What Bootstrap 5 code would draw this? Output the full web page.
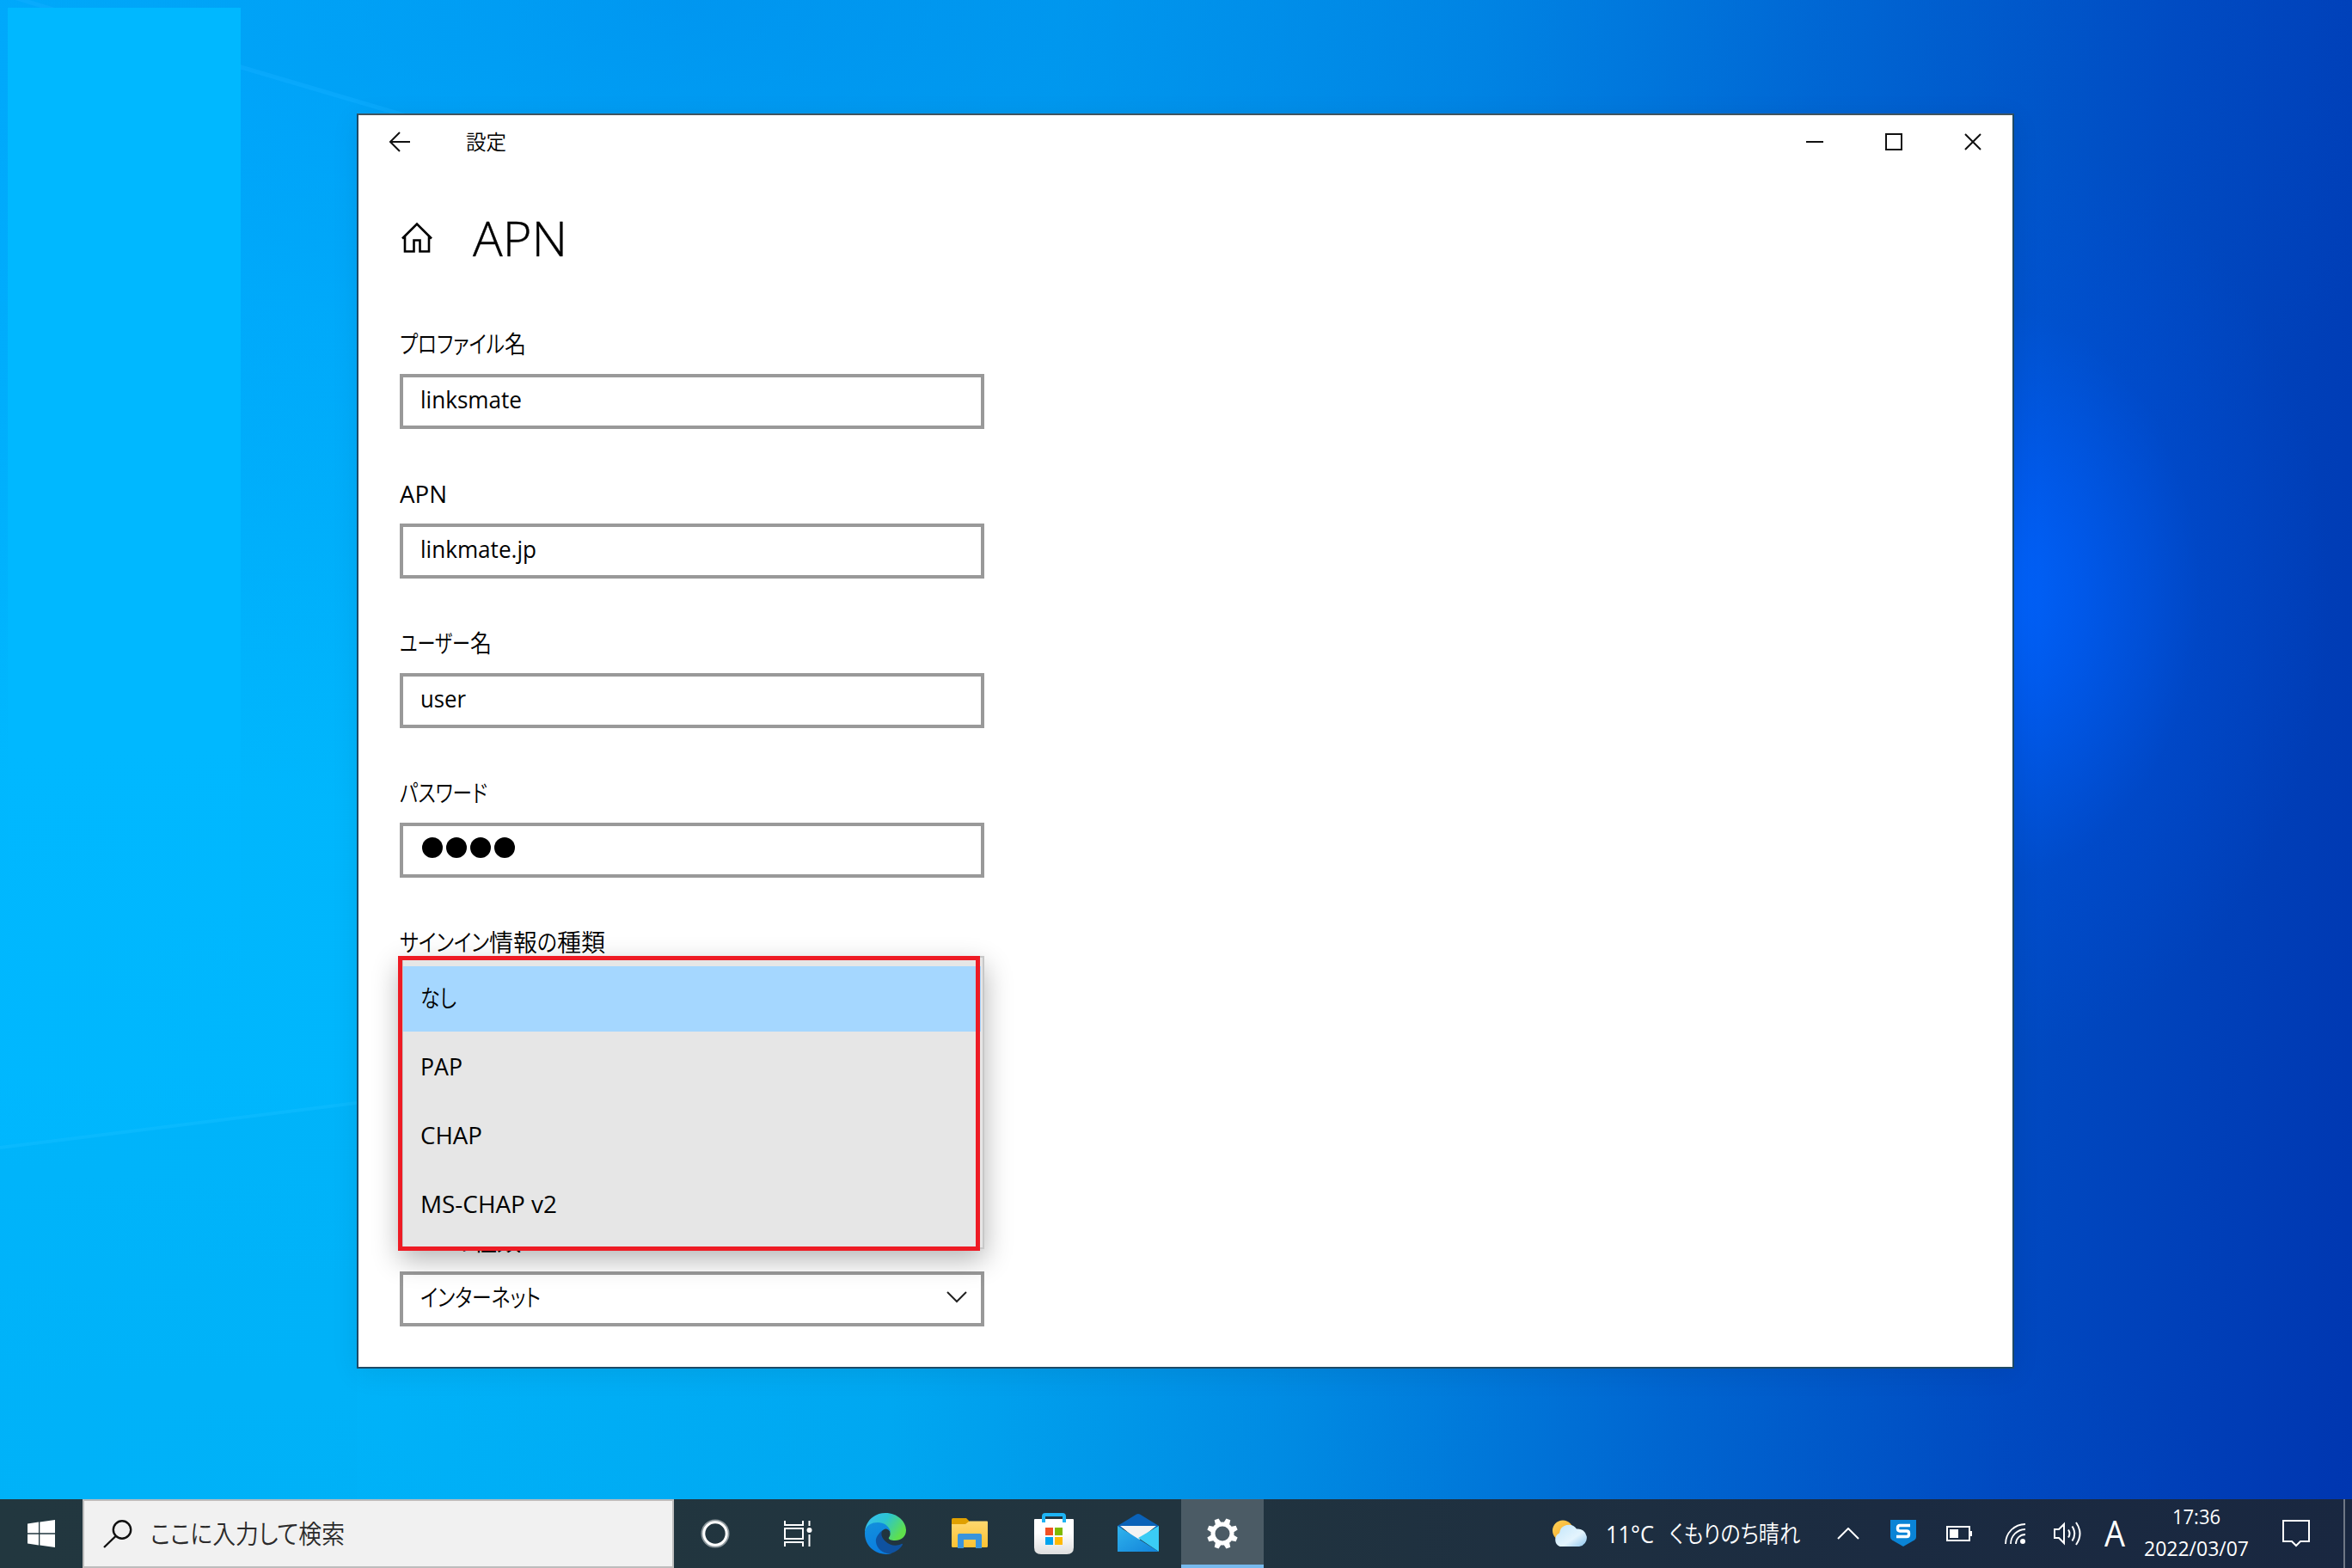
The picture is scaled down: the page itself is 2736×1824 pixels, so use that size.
<!DOCTYPE html>
<html lang="ja">
<head>
  <meta charset="UTF-8">
  <meta name="viewport" content="width=device-width, initial-scale=1.0">
  <title>設定</title>
  <link href="https://cdn.jsdelivr.net/npm/bootstrap@5.3.3/dist/css/bootstrap.min.css" rel="stylesheet">
  <script src="https://cdn.jsdelivr.net/npm/bootstrap@5.3.3/dist/js/bootstrap.bundle.min.js"></script>
  <style>
    body {
      font-family: "Open Sans", "Noto Sans CJK JP", sans-serif;
      font-size: 28px;
      line-height: 40px;
      color: #000;
      font-feature-settings: "palt";
    }
    svg { display: block; flex: none; }
    [data-w] { display: inline-block; white-space: nowrap; transform-origin: 0 50%; }
    .jp { font-weight: 350; }

    /* desktop */
    .desktop {
      height: 1744px;
      background:
        radial-gradient(ellipse 400px 540px at 2310px 690px, rgba(0,100,255,1) 0, rgba(0,94,250,.7) 28%, rgba(0,80,225,.28) 62%, rgba(0,70,200,0) 100%),
        radial-gradient(ellipse 2100px 950px at 800px 0, rgba(0,106,226,.38) 0, rgba(0,120,235,.2) 45%, rgba(0,130,240,0) 100%),
        radial-gradient(ellipse 2300px 500px at 300px 1744px, rgba(0,160,230,.18) 0, rgba(0,160,230,0) 100%),
        linear-gradient(97deg, #00b8ff 0, #00b6fc 20%, #00a8f2 42%, #0088e2 58%, #0064d0 72%, #0048c0 86%, #0036b0 100%);
    }
    .wall-panel { left: 9px; top: 9px; width: 271px; height: 1234px; background: linear-gradient(#00b8ff 70%, rgba(0,184,255,0)); }

    /* settings window */
    .win { left: 415px; top: 132px; width: 1928px; height: 1460px; background: #fff; border: 2px solid #1e4a66; border-top-color: #40545f; box-shadow: 0 6px 30px rgba(0,0,0,.08); }
    .title-row { height: 62px; }
    .back-btn { width: 96px; }
    .win-title { font-size: 24px; margin-left: 29px; }
    .win-btn { width: 92px; }
    .head-row { height: 160px; padding-left: 50px; gap: 47px; }
    .head-row h1 { font-size: 55px; font-weight: 300; line-height: 1; -webkit-text-stroke: .4px #000; }
    .fields { padding: 24px 0 0 48px; }
    .field { width: 680px; height: 174px; }
    .field label { height: 40px; margin-bottom: 15px; }
    .box { height: 64px; border: 4px solid #999; padding: 0 16px 7px 20px; background: #fff; }
    .box-select { padding-right: 16px; padding-bottom: 4px; }

    /* open list */
    .pop { left: 0; top: 36px; width: 680px; height: 341px; background: #e6e6e6; border: 2px solid #c8c8c8; border-left-width: 4px; padding-top: 10px; box-shadow: 0 12px 30px rgba(0,0,0,.3); z-index: 2; }
    .pop-item { height: 80px; padding: 0 0 4px 20px; }
    .pop-item.on { background: #a5d7ff; height: 76px; margin-bottom: 2px; width: 672px; padding-bottom: 2px; }
    .red-frame { left: -2px; top: 36px; width: 677px; height: 343px; border: 5px solid #ee1b24; z-index: 3; }

    /* taskbar */
    .taskbar { height: 80px; color: #fff; background: linear-gradient(90deg, #22373f 0, #21343f 50%, #1b2b41 80%, #192740 100%); }
    .start-btn, .task-btn { width: 96px; }
    .search-box { width: 688px; background: #f1f1f1; border: 2px solid #bdbdbd; color: #2b2b2b; font-size: 30px; padding-left: 22px; gap: 21px; }
    .apps { margin-left: 6px; gap: 2px; }
    .task-btn.active { background: #4b5b65; border-bottom: 4px solid #76b9ed; padding-top: 4px; }
    .weather { gap: 22px; padding-right: 34px; }
    .weather .sky { margin-left: -4px; }
    .t-caret { width: 44px; }
    .t-shield { width: 84px; }
    .t-batt { width: 46px; }
    .t-wifi { width: 84px; }
    .t-vol { width: 39px; }
    .t-ime { width: 69px; font-size: 42px; padding-bottom: 2px; }
    .t-clock { width: 122px; font-size: 24px; line-height: 37px; padding-top: 1px; }
    .t-note { width: 110px; }
    .t-peek { width: 10px; border-left: 2px solid #6f7785; }
  </style>
</head>
<body class="overflow-hidden">

  <div class="desktop position-relative overflow-hidden">
    <svg class="position-absolute top-0 start-0" width="2736" height="1744" viewBox="0 0 2736 1744">
      <path d="M0 -8L280 78L450 128V800H0z" fill="url(#ray)"/>
      <path d="M0 -8L280 78L470 134" fill="none" stroke="#10aeff" stroke-width="5" opacity=".5"/>
      <path d="M0 1336L415 1284V1744H0z" fill="#00aef6" opacity=".3"/>
      <path d="M0 1335L415 1283" stroke="#10bcff" stroke-width="4" opacity=".6"/>
      <defs><linearGradient id="ray" x1="0" y1="0" x2="0" y2="1"><stop offset="0" stop-color="#00a8ff" stop-opacity=".3"/><stop offset="1" stop-color="#00a8ff" stop-opacity="0"/></linearGradient></defs>
    </svg>
    <div class="wall-panel position-absolute"></div>

    <div class="win position-absolute">
      <div class="title-row d-flex align-items-center">
        <div class="back-btn d-flex justify-content-center">
          <svg width="26" height="24" viewBox="0 0 26 24" fill="none" stroke="#111" stroke-width="2"><path d="M25 12H2M13 1L2 12l11 11"/></svg>
        </div>
        <div class="win-title jp" data-w="47">設定</div>
        <div class="d-flex ms-auto">
          <div class="win-btn d-flex justify-content-center"><svg width="20" height="20" viewBox="0 0 20 20"><path d="M0 10H20" stroke="#111" stroke-width="2"/></svg></div>
          <div class="win-btn d-flex justify-content-center"><svg width="20" height="20" viewBox="0 0 20 20"><path d="M1 1H19V19H1z" fill="none" stroke="#111" stroke-width="2"/></svg></div>
          <div class="win-btn d-flex justify-content-center"><svg width="20" height="20" viewBox="0 0 20 20"><path d="M1 1L19 19M19 1L1 19" stroke="#111" stroke-width="2"/></svg></div>
        </div>
      </div>

      <div class="head-row d-flex align-items-center">
        <svg width="36" height="36" viewBox="0 0 36 36" fill="none" stroke="#000" stroke-width="2.6"><path d="M1 19.500L18 2.500L35 19.500M4 17V34.500H14.500V21.500H21.500V34.500H32V17"/></svg>
        <h1 class="m-0" data-w="110">APN</h1>
      </div>

      <div class="fields">
        <div class="field">
          <label class="d-block text-nowrap jp"><span data-w="122">プロファイル</span><span data-w="25">名</span></label>
          <div class="box d-flex align-items-center"><span data-w="118">linksmate</span></div>
        </div>
        <div class="field">
          <label class="d-block"><span data-w="55">APN</span></label>
          <div class="box d-flex align-items-center"><span data-w="135">linkmate.jp</span></div>
        </div>
        <div class="field">
          <label class="d-block text-nowrap jp"><span data-w="82">ユーザー</span><span data-w="25">名</span></label>
          <div class="box d-flex align-items-center"><span data-w="53">user</span></div>
        </div>
        <div class="field">
          <label class="d-block jp"><span data-w="102">パスワード</span></label>
          <div class="box d-flex align-items-center">
            <svg width="110" height="24" viewBox="0 0 110 24"><circle cx="14" cy="12" r="12"/><circle cx="42" cy="12" r="12"/><circle cx="70" cy="12" r="12"/><circle cx="98" cy="12" r="12"/></svg>
          </div>
        </div>
        <div class="field position-relative">
          <label class="d-block text-nowrap jp"><span data-w="104">サインイン</span><span data-w="56">情報</span><span data-w="23">の</span><span data-w="56">種類</span></label>
          <div class="pop position-absolute">
            <div class="pop-item on d-flex align-items-center jp"><span data-w="42">なし</span></div>
            <div class="pop-item d-flex align-items-center"><span data-w="49">PAP</span></div>
            <div class="pop-item d-flex align-items-center"><span data-w="72">CHAP</span></div>
            <div class="pop-item d-flex align-items-center"><span data-w="159">MS-CHAP v2</span></div>
          </div>
          <div class="red-frame position-absolute"></div>
        </div>
        <div class="field"></div>
        <div class="field">
          <label class="d-block text-nowrap"><span data-w="55">APN</span> <span data-w="23">の</span><span data-w="56">種類</span></label>
          <div class="box box-select d-flex align-items-center justify-content-between jp">
            <span data-w="140">インターネット</span>
            <svg width="24" height="14" viewBox="0 0 24 14"><path d="M1 1L12 12L23 1" fill="none" stroke="#222" stroke-width="2"/></svg>
          </div>
        </div>
      </div>
    </div>
  </div>

  <div class="taskbar d-flex align-items-stretch">
    <div class="start-btn d-flex align-items-center justify-content-center">
      <svg width="32" height="32" viewBox="0 0 32 32" fill="#fff"><path d="M0 4.500L13 2.600V15.300H0zM14.300 2.400L32 0V15.300H14.300zM0 16.700H13V29.400L0 27.500zM14.300 16.700H32V32L14.300 29.600z"/></svg>
    </div>
    <div class="search-box d-flex align-items-center jp">
      <svg width="34" height="33" viewBox="0 0 34 33" fill="none" stroke="#111" stroke-width="2.400"><circle cx="22" cy="11.500" r="10.200"/><path d="M14.500 19L1 32"/></svg>
      <span data-w="226">ここに入力して検索</span>
    </div>
    <div class="task-btn d-flex align-items-center justify-content-center">
      <svg width="34" height="34" viewBox="0 0 34 34" fill="none"><circle cx="17" cy="17" r="14.500" stroke="#8c979c" stroke-width="4"/><circle cx="17" cy="17" r="13.200" stroke="#fff" stroke-width="3"/></svg>
    </div>
    <div class="task-btn d-flex align-items-center justify-content-center">
      <svg width="33" height="32" viewBox="0 0 33 32" fill="none" stroke="#fff" stroke-width="2"><path d="M1 1V6H22V1M1 31V26H22V31M1 10H22V22H1zM29.500 1V7M29.500 17V31"/><circle cx="29.500" cy="12" r="3" fill="#fff" stroke="none"/></svg>
    </div>
    <div class="apps d-flex">
      <div class="task-btn d-flex align-items-center justify-content-center">
        <svg width="48" height="48" viewBox="0 0 48 48">
          <defs>
            <linearGradient id="eg1" x1="0" y1="0" x2="1" y2=".5"><stop offset="0" stop-color="#38bdf8"/><stop offset=".5" stop-color="#2cc4d0"/><stop offset="1" stop-color="#5fe04c"/></linearGradient>
            <linearGradient id="eg2" x1="0" y1="0" x2=".3" y2="1"><stop offset="0" stop-color="#1390dc"/><stop offset="1" stop-color="#0a7ee0"/></linearGradient>
          </defs>
          <path d="M0 22C1 9 11 0 24 0C38 0 48 10 48 20C48 28 42 32 35 32C30 32 27 30.500 28 28.500C30 26 30 23 28.500 20C25 13 8 8 0 22z" fill="url(#eg1)"/>
          <path d="M0 24C0 15 7 11 15 11C24 11 30 17 30 24C30 21 27 18.500 24 18.500C19 20 15 26 18 35C20 41 25 46 31 47C17 51 0 41 0 24z" fill="url(#eg2)"/>
          <path d="M20.500 20C17 23 12 28 13 34C14 42 22 48 30 47.200C37 45 42 41 44 36.500C44.200 35.500 43.300 35.500 42.500 36C37 39 29 38 24 33C19 28 18.500 24 20.500 20z" fill="#0f52a0"/>
        </svg>
      </div>
      <div class="task-btn d-flex align-items-center justify-content-center">
        <svg width="42" height="48" viewBox="0 0 42 48">
          <defs><linearGradient id="fg" x1="0" y1="0" x2="0" y2="1"><stop offset="0" stop-color="#ffd86f"/><stop offset="1" stop-color="#fbc233"/></linearGradient></defs>
          <path d="M0 7.500Q0 6 1.500 6H17L20 9V14H0z" fill="#e0a000"/>
          <path d="M0 13H16L20.500 9.500H41Q42 9.500 42 10.500V38.500Q42 40 40.500 40H1.500Q0 40 0 38.500z" fill="url(#fg)"/>
          <path d="M7 41V26Q7 24 9 24H33Q35 24 35 26V41H28V31H14V41z" fill="#3a94dc"/>
        </svg>
      </div>
      <div class="task-btn d-flex align-items-center justify-content-center">
        <svg width="46" height="48" viewBox="0 0 46 48">
          <defs><linearGradient id="sg" x1="0" y1="0" x2="0" y2="1"><stop offset=".4" stop-color="#fff"/><stop offset="1" stop-color="#dedede"/></linearGradient></defs>
          <path d="M0 8Q0 7 1 7H45Q46 7 46 8V40Q46 48 38 48H8Q0 48 0 40z" fill="url(#sg)"/>
          <path d="M11 11V4Q11 2 13 2H33Q35 2 35 4V11" fill="none" stroke="#1eb4f4" stroke-width="4"/>
          <path d="M13 17H22V26H13z" fill="#f25022"/><path d="M24 17H33V26H24z" fill="#7fba00"/>
          <path d="M13 28H22V37H13z" fill="#00a4ef"/><path d="M24 28H33V37H24z" fill="#ffb900"/>
        </svg>
      </div>
      <div class="task-btn d-flex align-items-center justify-content-center">
        <svg width="48" height="48" viewBox="0 0 48 48">
          <defs><linearGradient id="mg" x1="0" y1="0" x2="1" y2="1"><stop offset="0" stop-color="#2fb4ee"/><stop offset="1" stop-color="#1282d8"/></linearGradient></defs>
          <path d="M0 15L22 1.500Q24 .5 26 1.500L48 15V18H0z" fill="#0a62b8"/>
          <path d="M3 15H45L24 32z" fill="#f3f3f3"/>
          <path d="M48 15V45L24 29z" fill="#3accf5"/>
          <path d="M0 15L48 45H0z" fill="url(#mg)"/>
        </svg>
      </div>
      <div class="task-btn active d-flex align-items-center justify-content-center">
        <svg width="36" height="36" viewBox="-18 -18 36 36">
          <circle r="11" fill="none" stroke="#fff" stroke-width="5"/>
          <g id="teeth" fill="#fff"></g>
        </svg>
      </div>
    </div>

    <div class="d-flex align-items-stretch ms-auto">
      <div class="weather d-flex align-items-center">
        <svg width="40" height="32" viewBox="0 0 40 32">
          <defs>
            <linearGradient id="wg" x1="0" y1="0" x2="1" y2="1"><stop offset="0" stop-color="#c2e6fb"/><stop offset=".6" stop-color="#e4f4fd"/><stop offset="1" stop-color="#8cc4ec"/></linearGradient>
            <linearGradient id="sun" x1="0" y1="0" x2="1" y2="1"><stop offset="0" stop-color="#ffd35a"/><stop offset="1" stop-color="#f5a21c"/></linearGradient>
          </defs>
          <circle cx="12" cy="12.500" r="12" fill="url(#sun)"/>
          <path d="M8.500 31A8.500 8.500 0 0 1 8 15.500A11 11 0 0 1 28 10.500A10.300 10.300 0 0 1 31 31z" fill="url(#wg)"/>
        </svg>
        <span data-w="56">11°C</span>
        <span class="sky jp" data-w="152">くもりのち晴れ</span>
      </div>
      <div class="t-caret d-flex align-items-center justify-content-center"><svg width="26" height="14" viewBox="0 0 26 14"><path d="M1 13L13 1L25 13" fill="none" stroke="#fff" stroke-width="2"/></svg></div>
      <div class="t-shield d-flex align-items-center justify-content-center">
        <svg width="30" height="32" viewBox="0 0 30 32"><path d="M0 0H30V20Q30 22 28 23.500L15 31L2 23.500Q0 22 0 20z" fill="#0a84d6"/><path d="M23 6.500H11Q8.500 6.500 8.500 9V10.500Q8.500 13 11 13H19Q21.500 13 21.500 15.500V17Q21.500 19.500 19 19.500H7" fill="none" stroke="#fff" stroke-width="3.400"/></svg>
      </div>
      <div class="t-batt d-flex align-items-center justify-content-center"><svg width="30" height="18" viewBox="0 0 30 18"><path d="M1 1H27V17H1z" fill="none" stroke="#fff" stroke-width="2"/><path d="M4 4H14V14H4zM28 6H30V12H28z" fill="#fff"/></svg></div>
      <div class="t-wifi d-flex align-items-center justify-content-center"><svg width="24" height="28" viewBox="0 0 24 28" fill="none" stroke="#fff" stroke-width="1.800"><path d="M1 26A23 23 0 0 1 24 3M7 26A17 17 0 0 1 24 9M13 26A11 11 0 0 1 24 15"/><circle cx="21" cy="23" r="3" fill="#fff" stroke="none"/></svg></div>
      <div class="t-vol d-flex align-items-center justify-content-center"><svg width="33" height="28" viewBox="0 0 33 28" fill="none" stroke="#fff" stroke-width="2"><path d="M1 9H6L12 3V25L6 19H1zM17 9.500Q20 14 17 18.500M21.500 5.500Q27 14 21.500 22.500M26 1Q35 14 26 27"/></svg></div>
      <div class="t-ime d-flex align-items-center justify-content-center"><span data-w="24">A</span></div>
      <div class="t-clock text-center"><div><span data-w="56">17:36</span></div><div><span data-w="122">2022/03/07</span></div></div>
      <div class="t-note d-flex align-items-center justify-content-center"><svg width="32" height="32" viewBox="0 0 32 32"><path d="M1 1H31V25H21L16 30L11 25H1z" fill="none" stroke="#fff" stroke-width="2"/></svg></div>
      <div class="t-peek"></div>
    </div>
  </div>

  <script>
    'use strict';

    // 歯車の歯
    let teeth = '';
    for (let i = 0; i < 8; i++) {
      teeth += '<path d="M-3.600 -12L-2.600 -18H2.600L3.600 -12z" transform="rotate(' + (i * 45 + 22.5) + ')"/>';
    }
    document.getElementById('teeth').innerHTML = teeth;

    // 文字を data-w の幅に合わせて縮める
    document.querySelectorAll('[data-w]').forEach(function (el) {
      let range = document.createRange();
      range.selectNodeContents(el);
      let w = Number(el.dataset.w);
      let scale = w / range.getBoundingClientRect().width;
      el.style.width = w + 'px';
      el.style.transform = 'scaleX(' + scale.toFixed(4) + ')';
      // 拡大時にずれないよう左端を基準にする
      el.style.textAlign = 'left';
    });
  </script>

</body>
</html>
